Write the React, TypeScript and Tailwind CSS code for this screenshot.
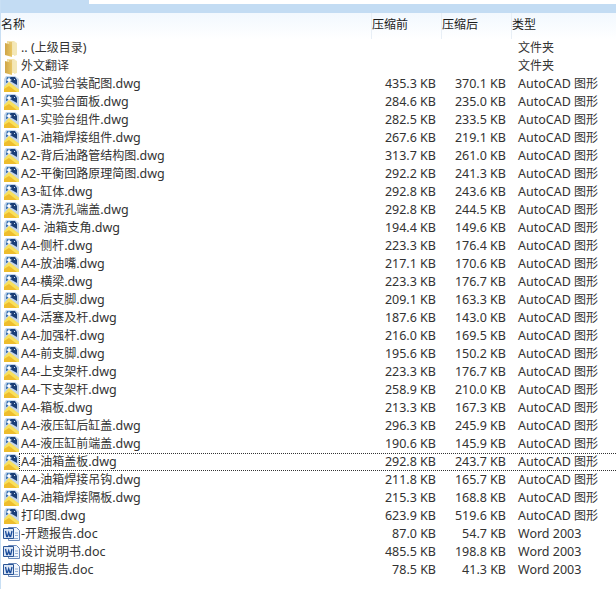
const rows: [string, string, string, string, string][] = [
  ["folder", ".. (上级目录)", "", "", "文件夹"],
  ["folder", "外文翻译", "", "", "文件夹"],
  ["dwg", "A0-试验台装配图.dwg", "435.3 KB", "370.1 KB", "AutoCAD 图形"],
  ["dwg", "A1-实验台面板.dwg", "284.6 KB", "235.0 KB", "AutoCAD 图形"],
  ["dwg", "A1-实验台组件.dwg", "282.5 KB", "233.5 KB", "AutoCAD 图形"],
  ["dwg", "A1-油箱焊接组件.dwg", "267.6 KB", "219.1 KB", "AutoCAD 图形"],
  ["dwg", "A2-背后油路管结构图.dwg", "313.7 KB", "261.0 KB", "AutoCAD 图形"],
  ["dwg", "A2-平衡回路原理简图.dwg", "292.2 KB", "241.3 KB", "AutoCAD 图形"],
  ["dwg", "A3-缸体.dwg", "292.8 KB", "243.6 KB", "AutoCAD 图形"],
  ["dwg", "A3-清洗孔端盖.dwg", "292.8 KB", "244.5 KB", "AutoCAD 图形"],
  ["dwg", "A4- 油箱支角.dwg", "194.4 KB", "149.6 KB", "AutoCAD 图形"],
  ["dwg", "A4-侧杆.dwg", "223.3 KB", "176.4 KB", "AutoCAD 图形"],
  ["dwg", "A4-放油嘴.dwg", "217.1 KB", "170.6 KB", "AutoCAD 图形"],
  ["dwg", "A4-横梁.dwg", "223.3 KB", "176.7 KB", "AutoCAD 图形"],
  ["dwg", "A4-后支脚.dwg", "209.1 KB", "163.3 KB", "AutoCAD 图形"],
  ["dwg", "A4-活塞及杆.dwg", "187.6 KB", "143.0 KB", "AutoCAD 图形"],
  ["dwg", "A4-加强杆.dwg", "216.0 KB", "169.5 KB", "AutoCAD 图形"],
  ["dwg", "A4-前支脚.dwg", "195.6 KB", "150.2 KB", "AutoCAD 图形"],
  ["dwg", "A4-上支架杆.dwg", "223.3 KB", "176.7 KB", "AutoCAD 图形"],
  ["dwg", "A4-下支架杆.dwg", "258.9 KB", "210.0 KB", "AutoCAD 图形"],
  ["dwg", "A4-箱板.dwg", "213.3 KB", "167.3 KB", "AutoCAD 图形"],
  ["dwg", "A4-液压缸后缸盖.dwg", "296.3 KB", "245.9 KB", "AutoCAD 图形"],
  ["dwg", "A4-液压缸前端盖.dwg", "190.6 KB", "145.9 KB", "AutoCAD 图形"],
  ["dwg", "A4-油箱盖板.dwg", "292.8 KB", "243.7 KB", "AutoCAD 图形"],
  ["dwg", "A4-油箱焊接吊钩.dwg", "211.8 KB", "165.7 KB", "AutoCAD 图形"],
  ["dwg", "A4-油箱焊接隔板.dwg", "215.3 KB", "168.8 KB", "AutoCAD 图形"],
  ["dwg", "打印图.dwg", "623.9 KB", "519.6 KB", "AutoCAD 图形"],
  ["doc", "-开题报告.doc", "87.0 KB", "54.7 KB", "Word 2003"],
  ["doc", "设计说明书.doc", "485.5 KB", "198.8 KB", "Word 2003"],
  ["doc", "中期报告.doc", "78.5 KB", "41.3 KB", "Word 2003"],
];

function T({ s }: { s: string }) {
  return (
    <>
      {s.split(/([\u3000-\u9fff]+)/).map((part, i) =>
        i % 2 === 1 ? (
          <span key={i} className="text-[12px]">
            {part}
          </span>
        ) : (
          part
        )
      )}
    </>
  );
}

function FolderIcon() {
  return (
    <svg width="15" height="17" viewBox="0 0 15 17">
      <defs>
        <linearGradient id="fb" x1="0" y1="0" x2="1" y2="0">
          <stop offset="0" stopColor="#efdc9c" />
          <stop offset="1" stopColor="#f7edc4" />
        </linearGradient>
        <linearGradient id="ff" x1="0" y1="0" x2="1" y2="0">
          <stop offset="0" stopColor="#cfa548" />
          <stop offset="1" stopColor="#e8c765" />
        </linearGradient>
      </defs>
      <path d="M3 1h7l3 2v12H3z" fill="url(#fb)" />
      <path d="M5 2h3v12H5z" fill="#e3c472" />
      <path d="M10 3h3v12l-3 1z" fill="#f4e8b8" />
      <path d="M1 3l7 2v12l-7-2z" fill="url(#ff)" />
    </svg>
  );
}

function DwgIcon() {
  return (
    <svg width="16" height="17" viewBox="0 0 16 17">
      <path d="M2 0h9l4 3v13H0V3z" fill="#c4d6ea" />
      <path d="M3 1h8l2 3v5L6 5 2 7z" fill="#1b3f78" />
      <path d="M3 1h4L5 5 2 7z" fill="#3a78ba" />
      <path d="M5 1l1 2 2 1-2 1-1 2-1-2-2-1 2-1z" fill="#ffffff" />
      <path d="M10 3h1v1h-1z" fill="#cfe0f2" />
      <path d="M0 16V11l5-5 10 7.500V16z" fill="#f8e05c" />
      <path d="M0 16v-3l5-3 8 6z" fill="#eebd2c" />
    </svg>
  );
}

function DocIcon() {
  return (
    <svg width="17" height="16" viewBox="0 0 17 16">
      <path d="M5.500 1.500h8l3 3v10h-11z" fill="#f2f6fc" stroke="#6a89bb" strokeWidth="1" />
      <path d="M12 7h3M12 9.500h3M7 12.500h8" stroke="#93add3" strokeWidth="1" />
      <path d="M0.500 2.500h10v10h-10z" fill="#dbe6f6" stroke="#2b5595" strokeWidth="1" />
      <path d="M2.500 5l1.200 5.500h0.800l1.200-3.800 1.200 3.800h0.800L9 5" fill="none" stroke="#1c4d9c" strokeWidth="1.300" />
    </svg>
  );
}

function RowIcon({ kind }: { kind: string }) {
  if (kind === "folder") return <FolderIcon />;
  if (kind === "dwg") return <DwgIcon />;
  return <DocIcon />;
}

export default function App() {
  return (
    <div className="w-[616px] h-[589px] overflow-hidden bg-white text-[12.5px] leading-[18px] text-[#333333] border-l border-[#c8dff4] font-['Noto_Sans','Noto_Sans_CJK_SC',sans-serif]">
      <div className="h-[13px] bg-[#c3dcf3] pl-[88px]">
        <div className="h-1 bg-white" />
      </div>
      <div className="flex h-[26px] bg-gradient-to-b from-[#f2f8fe] to-white text-[#1c1c1c]">
        <div className="w-[370px] pt-[3px]"><T s="名称" /></div>
        <div className="w-[70px] pt-[3px] border-l border-[#e8eff6]"><T s="压缩前" /></div>
        <div className="w-[70px] pt-[3px] border-l border-[#e8eff6]"><T s="压缩后" /></div>
        <div className="flex-1 pt-[3px] border-l border-[#e8eff6]"><T s="类型" /></div>
      </div>
      <div className="flex flex-col">
        {rows.map((r, i) => (
          <div key={i} className="relative flex h-[18px] items-center">
            <div className={r[0] === "doc" ? "w-[19px] pl-[2px] shrink-0" : "w-[19px] pl-[3px] shrink-0"}>
              <RowIcon kind={r[0]} />
            </div>
            <div className="w-[350px] pl-px whitespace-nowrap shrink-0"><T s={r[1]} /></div>
            <div className="w-[66px] text-right shrink-0">{r[2]}</div>
            <div className="w-[70px] text-right shrink-0">{r[3]}</div>
            <div className="pl-[12px] whitespace-nowrap"><T s={r[4]} /></div>
            {i === 23 && (
              <div className="absolute left-[18px] right-0 top-0 bottom-0 border-y border-l border-dotted border-[#333333]" />
            )}
          </div>
        ))}
      </div>
    </div>
  );
}
